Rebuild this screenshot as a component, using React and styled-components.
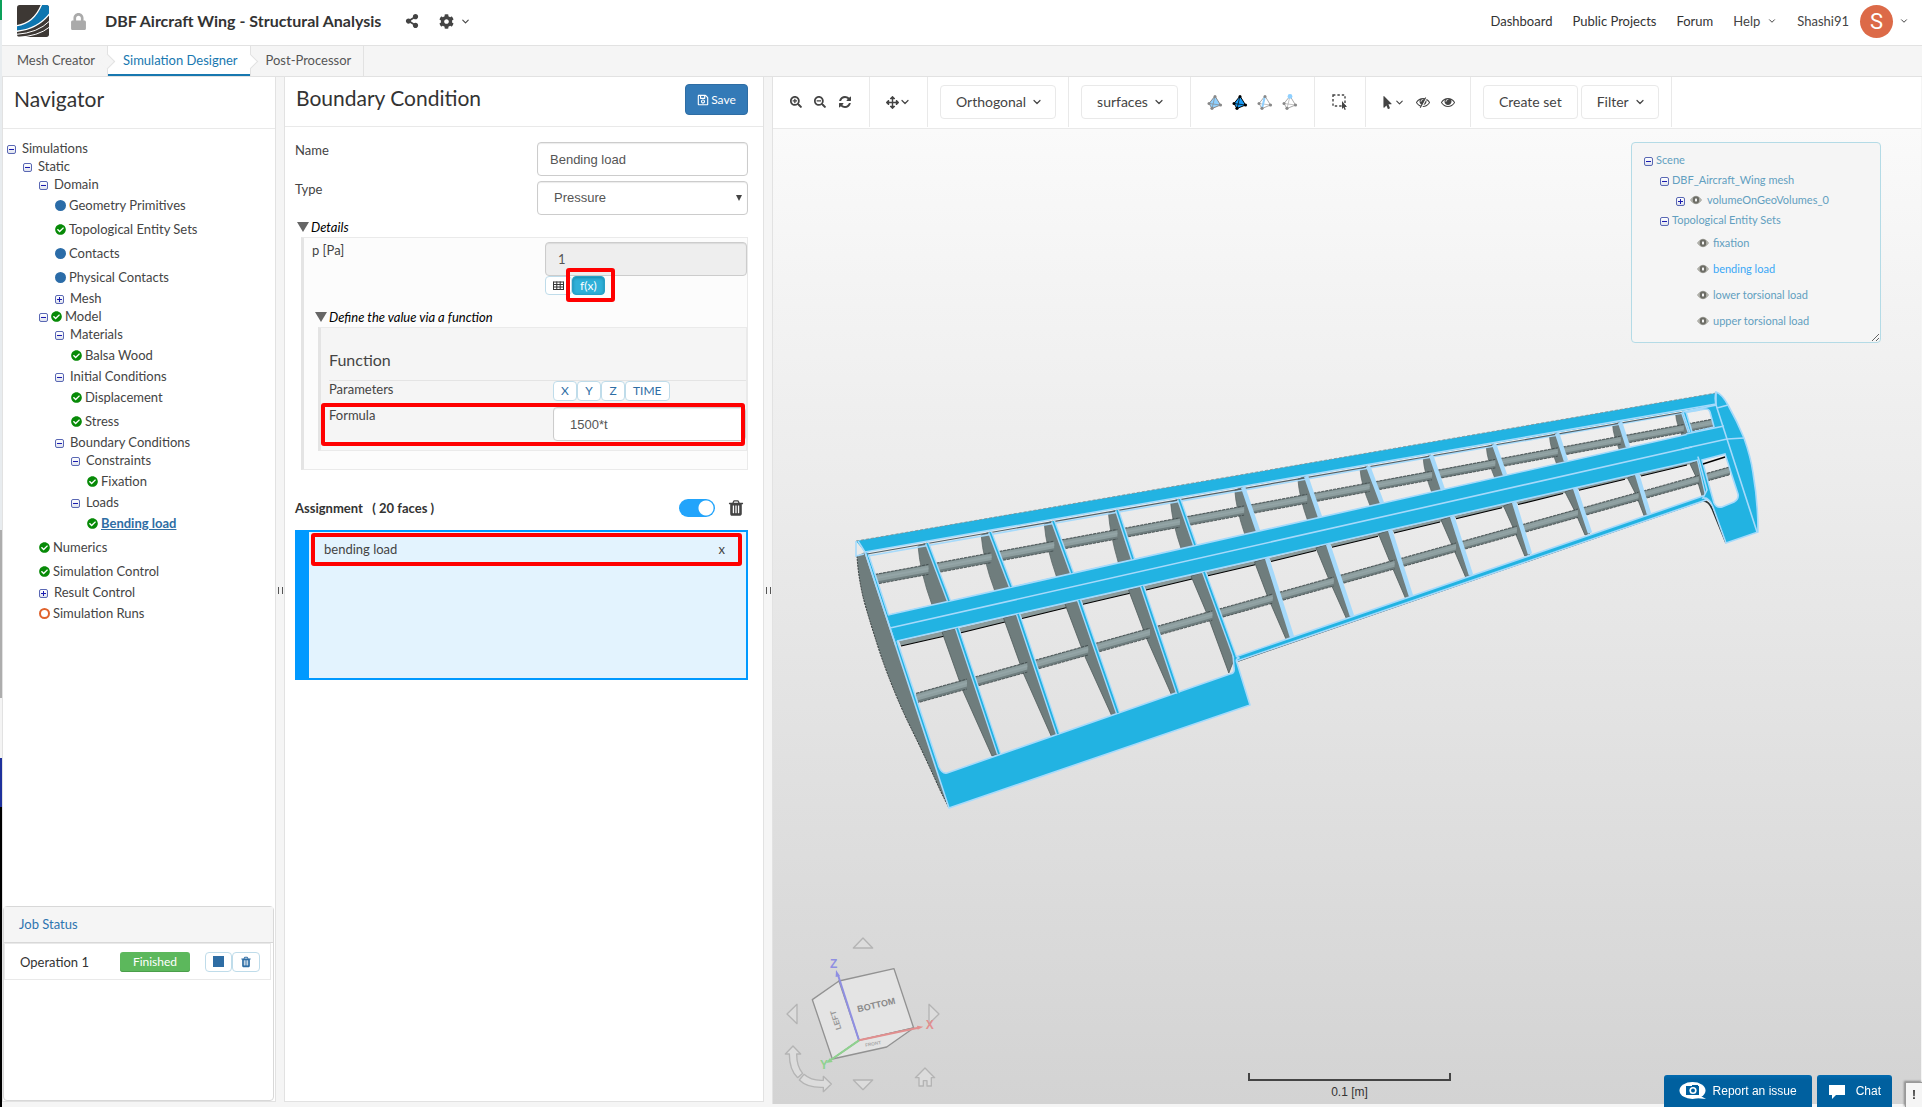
import React, { Component } from "react";
import styled, { createGlobalStyle, css } from "styled-components";
import {
  FaLock,
  FaShareAlt,
  FaCog,
  FaSearchPlus,
  FaSearchMinus,
  FaArrowsAlt,
  FaMousePointer,
  FaRegSave,
  FaCheckCircle,
} from "react-icons/fa";
import { FiChevronDown } from "react-icons/fi";

const GlobalStyle = createGlobalStyle`
  * { box-sizing: border-box; }
  body {
    margin: 0;
    font-family: Lato, "Liberation Sans", sans-serif;
    font-size: 13px;
    line-height: 16px;
    color: #333;
    background: #f5f5f5;
  }
  button, input, select { font: inherit; color: inherit; margin: 0; }
  button { cursor: pointer; }
  a { color: inherit; text-decoration: none; }
  h1, h2, h3 { margin: 0; font-weight: 400; }
  ul { list-style: none; margin: 0; padding: 0; }
`;

//Icons
const Glyph = ({ d, size = 14 }) => (
  <svg width={size} height={size} viewBox="0 0 1792 1792" fill="currentColor" aria-hidden="true">
    <path d={d} />
  </svg>
);

const REFRESH =
  "M1639 1056q0 5-1 7-64 268-268 434.5t-478 166.5q-146 0-282.5-55t-243.5-157l-129 129q-19 19-45 19t-45-19-19-45v-448q0-26 19-45t45-19h448q26 0 45 19t19 45-19 45l-137 137q71 66 161 102t187 36q134 0 250-65t186-179q11-17 53-117 8-23 30-23h192q13 0 22.5 9.5t9.5 22.5zm25-800v448q0 26-19 45t-45 19h-448q-26 0-45-19t-19-45 19-45l138-138q-148-137-349-137-134 0-250 65t-186 179q-11 17-53 117-8 23-30 23h-199q-13 0-22.5-9.5t-9.5-22.5v-7q65-268 270-434.5t480-166.5q146 0 284 55.5t245 156.5l130-129q19-19 45-19t45 19 19 45z";
const TRASH =
  "M704 1376v-704q0-14-9-23t-23-9h-64q-14 0-23 9t-9 23v704q0 14 9 23t23 9h64q14 0 23-9t9-23zm256 0v-704q0-14-9-23t-23-9h-64q-14 0-23 9t-9 23v704q0 14 9 23t23 9h64q14 0 23-9t9-23zm256 0v-704q0-14-9-23t-23-9h-64q-14 0-23 9t-9 23v704q0 14 9 23t23 9h64q14 0 23-9t9-23zm-544-992h448l-48-117q-7-9-17-11h-317q-10 2-17 11zm928 32v64q0 14-9 23t-23 9h-96v948q0 83-47 143.5t-113 60.5h-832q-66 0-113-58.5t-47-141.5v-952h-96q-14 0-23-9t-9-23v-64q0-14 9-23t23-9h309l70-167q15-37 54-63t79-26h320q40 0 79 26t54 63l70 167h309q14 0 23 9t9 23z";
const EYE =
  "M1664 960q-152-236-381-353 61 104 61 225 0 185-131.5 316.5t-316.5 131.5-316.5-131.5-131.5-316.5q0-121 61-225-229 117-381 353 133 205 333.5 326.5t434.5 121.5 434.5-121.5 333.5-326.5zm-720-384q0-20-14-34t-34-14q-125 0-214.5 89.5t-89.5 214.5q0 20 14 34t34 14 34-14 14-34q0-86 61-147t147-61q20 0 34-14t14-34zm848 384q0 34-20 69-140 230-376.5 368.5t-499.5 138.5-499.5-139-376.5-368q-20-35-20-69t20-69q140-229 376.5-368t499.5-139 499.5 139 376.5 368q20 35 20 69z";

const EyeSlash = () => (
  <svg width="14" height="14" viewBox="0 0 1792 1792" aria-hidden="true">
    <path d={EYE} fill="currentColor" />
    <path d="M1360 300L690 1600" stroke="#fff" strokeWidth="200" />
    <path d="M1250 330L540 1620" stroke="currentColor" strokeWidth="130" />
  </svg>
);

const TableIcon = () => (
  <svg width="11" height="9" viewBox="0 0 11 9" aria-hidden="true">
    <path d="M.5 1H10.5M.5 3.5H10.5M.5 6H10.5M.5 8.5H10.5M.5 .5V9M3.8 .5V9M7.2 .5V9M10.5 .5V9" stroke="currentColor" fill="none" />
  </svg>
);

const SceneEye = () => (
  <svg width="12" height="10" viewBox="0 0 12 10" aria-hidden="true">
    <path d="M.5 5Q3 1.2 6 1.2T11.5 5Q9 8.8 6 8.8T.5 5Z" fill="#c6c6bf" stroke="#8f8f88" strokeWidth=".8" />
    <circle cx="6" cy="5" r="3.4" fill="#6d6d66" />
    <rect x="5" y="3.6" width="2" height="2.8" fill="#f5f5f5" />
  </svg>
);

const Logo = () => (
  <svg width="32" height="32" viewBox="0 0 96 96" aria-hidden="true">
    <defs>
      <clipPath id="logo-clip">
        <rect width="96" height="96" rx="8" />
      </clipPath>
    </defs>
    <g clipPath="url(#logo-clip)">
      <rect width="96" height="96" fill="#3d3834" />
      <path d="M0 62Q50 56 75 0H96V28Q66 72 0 78Z" fill="#0d76b0" />
      <path d="M-2 62Q50 56 74 -2" fill="none" stroke="#fff" strokeWidth="4" />
      <path d="M-2 79Q62 72 98 26" fill="none" stroke="#fff" strokeWidth="4" />
      <path d="M-2 88Q62 84 98 48" fill="none" stroke="#fff" strokeWidth="3" />
      <path d="M0 97Q64 94 98 66" fill="none" stroke="#fff" strokeWidth="3" />
    </g>
  </svg>
);

const Tetra = ({ face, edge, dots, line, tip }) => (
  <svg width="16" height="16" viewBox="0 0 16 16" aria-hidden="true">
    <path d="M8 2L13.5 11L5 14.5L2 9.5Z" fill={face || "none"} stroke={edge} strokeWidth="1" />
    <path d="M2 9.5L13.5 11M8 2L5 14.5" stroke={edge} strokeWidth=".7" />
    {line && <path d="M8 2L5 14.5" stroke="#8fd0ff" strokeWidth="2" />}
    <circle cx="2" cy="9.5" r="1.5" fill={dots} />
    <circle cx="13.5" cy="11" r="1.6" fill={dots} />
    <circle cx="5" cy="14.3" r="1.6" fill={dots} />
    <circle cx="8" cy="2.4" r={tip ? 2.4 : 1.5} fill={tip || dots} />
  </svg>
);

const BoxSelect = () => (
  <svg width="16" height="16" viewBox="0 0 16 16" aria-hidden="true">
    <rect x="1" y="1" width="12" height="11" fill="none" stroke="#444" strokeWidth="1.4" strokeDasharray="2.4 2" />
    <path d="M10 7L15 13L12.8 13L13.8 15.4L12.6 16L11.6 13.6L10 15Z" fill="#444" />
  </svg>
);

//Shell
const Shell = styled.div`
  min-height: 100vh;
  display: flex;
  background: #f5f5f5;
`;

const DesktopEdge = styled.div`
  width: 2px;
  flex: none;
  background: linear-gradient(
    #0ca05a 0 20px, #e8ecef 20px 530px, #adadad 530px 698px,
    #f4f4f4 698px 758px, #1e319c 758px 807px, #000 807px
  );
`;

const Page = styled.div`
  flex: 1;
  min-width: 0;
  display: flex;
  flex-direction: column;
`;

const TopBar = styled.header`
  height: 46px;
  display: flex;
  align-items: center;
  justify-content: space-between;
  padding: 0 13px 3px 15px;
  background: #fff;
  border-bottom: 1px solid #e2e2e2;
`;

const TopGroup = styled.div`
  display: flex;
  align-items: center;
  svg { display: block; }
`;

const ProjectTitle = styled.h1`
  font-size: 16px;
  line-height: 20px;
  font-weight: 700;
  margin: 0 24px 0 18px;
`;

const LockMark = styled.span`
  margin-left: 21px;
  color: #aaa;
`;

const PlainButton = styled.button`
  display: inline-flex;
  align-items: center;
  gap: ${(p) => p.$gap || 0}px;
  padding: 0;
  border: 0;
  background: none;
  color: ${(p) => p.$color || "#444"};
  svg { display: block; }
`;

const TopNav = styled.nav`
  display: flex;
  align-items: center;
  gap: 20px;
  svg { display: block; }
`;

const Avatar = styled.span`
  width: 33px;
  height: 33px;
  margin-left: 5px;
  border-radius: 50%;
  display: flex;
  align-items: center;
  justify-content: center;
  background: #dc6a48;
  color: #fff;
  font: 22px/33px Roboto, sans-serif;
`;

const Tabs = styled.nav`
  height: 31px;
  display: flex;
  border-bottom: 1px solid #e2e2e2;
`;

const Tab = styled.a`
  position: relative;
  padding: 6px 12px 0 15px;
  border-right: 1px solid #e2e2e2;
  color: ${(p) => (p.$active ? "#1878b0" : "#555")};
  background: ${(p) => (p.$active ? "#fff" : "#f5f5f5")};
  ${(p) => p.$active && css`box-shadow: inset 0 -2px #1878b0;`}
  ${(p) => p.$arrow && css`
    &::after {
      content: "";
      position: absolute;
      z-index: 1;
      top: 10px;
      right: -6px;
      width: 10px;
      height: 10px;
      background: inherit;
      border-top: 1px solid #e2e2e2;
      border-right: 1px solid #e2e2e2;
      transform: rotate(45deg);
    }
  `}
`;

const Workspace = styled.main`
  flex: 1;
  min-height: 0;
  display: flex;
  padding-bottom: 3px;
`;

const Splitter = styled.div`
  width: 8px;
  flex: none;
  display: flex;
  align-items: center;
  justify-content: center;
  &::before {
    content: "";
    width: 3px;
    height: 7px;
    border: solid #555;
    border-width: 0 1px;
  }
`;

const SidePanel = styled.section`
  width: ${(p) => p.$width}px;
  flex: none;
  display: flex;
  flex-direction: column;
  margin-bottom: 2px;
  background: #fff;
  border: solid #e2e2e2;
  border-width: 0 1px 1px;
`;

const PanelHead = styled.div`
  height: ${(p) => p.$height}px;
  flex: none;
  display: flex;
  align-items: center;
  justify-content: space-between;
  padding: 0 15px 4px 11px;
  border-bottom: 1px solid #e9e9e9;
`;

const PanelTitle = styled.h2`
  padding-bottom: 3px;
  font-size: 21px;
  line-height: 28px;
`;

//Navigator
const Tree = styled.ul`
  padding: 10px 0 0 4px;
  flex: 1;
`;

const TreeRow = styled.li`
  display: flex;
  align-items: center;
  height: ${(p) => (p.$leaf ? 24 : 18)}px;
  padding-left: ${(p) => p.$level * 16}px;
  gap: 3px;
`;

const Expander = styled.button`
  width: 9px;
  height: 9px;
  flex: none;
  padding: 0;
  margin: 3px ${(p) => (p.$tight ? 0 : 3)}px 0 0;
  position: relative;
  border: 1px solid #5a68b4;
  border-radius: 2px;
  background: linear-gradient(#fff, #dfe3ee);
  &::before {
    content: "";
    position: absolute;
    inset: 3px 1px;
    background: #1b1bb0;
  }
  ${(p) => p.$closed && css`
    &::after {
      content: "";
      position: absolute;
      inset: 1px 3px;
      background: #1b1bb0;
    }
  `}
`;

const Dot = styled.span`
  width: 11px;
  height: 11px;
  flex: none;
  border-radius: 50%;
  background: ${(p) => (p.$hollow ? "#fff" : "#2b6ca8")};
  border: 2px solid ${(p) => (p.$hollow ? "#e0622c" : "#2b6ca8")};
`;

const CheckMark = styled(FaCheckCircle)`
  width: 11px;
  height: 11px;
  flex: none;
  color: #078a07;
`;

const TreeLink = styled.a`
  color: ${(p) => (p.$selected ? "#2e6da4" : "#444")};
  font-weight: ${(p) => (p.$selected ? 700 : 400)};
  text-decoration: ${(p) => (p.$selected ? "underline" : "none")};
`;

const JobBox = styled.section`
  height: 195px;
  flex: none;
  margin: 0 1px 0 0;
  border: 1px solid #d8d8d8;
  border-radius: 4px;
`;

const JobHead = styled.h3`
  height: 36px;
  padding: 9px 15px;
  font-size: 13px;
  line-height: 16px;
  color: #2e74b0;
  background: #f5f5f5;
  border-bottom: 1px solid #d8d8d8;
`;

const JobRow = styled.div`
  display: flex;
  align-items: center;
  height: 37px;
  margin-right: 2px;
  padding-left: 15px;
  border: 1px solid #e9e9e9;
`;

const JobName = styled.span`
  width: 100px;
  flex: none;
`;

const Badge = styled.span`
  width: 70px;
  height: 20px;
  flex: none;
  margin-right: 15px;
  border-radius: 3px;
  background: #5cb85c;
  box-shadow: inset 0 -1px #4a9e4a;
  color: #fff;
  font-size: 12px;
  line-height: 19px;
  text-align: center;
`;

const SmallButton = styled.button`
  display: inline-flex;
  align-items: center;
  justify-content: center;
  min-width: ${(p) => p.$width || 24}px;
  height: ${(p) => p.$height || 20}px;
  padding: 0 7px;
  border: 1px solid #bfdcea;
  border-radius: 4px;
  background: #fff;
  color: ${(p) => p.$color || "#2e6da4"};
  font-size: 12px;
  line-height: 16px;
  ${(p) => p.$on && css`
    background: #2fb0d8;
    border-color: #27a0c6;
    color: #fff;
    box-shadow: inset 0 1px 3px #1786a8;
  `}
`;

const StopSquare = styled.span`
  width: 11px;
  height: 11px;
  flex: none;
  background: #2e6da4;
`;

//Boundary condition form
const SaveButton = styled.button`
  width: 63px;
  height: 31px;
  display: inline-flex;
  align-items: center;
  justify-content: center;
  gap: 2px;
  border: 1px solid #2e6da4;
  border-radius: 4px;
  padding: 0;
  background: #337ab7;
  color: #fff;
  font-size: 12px;
`;

const FormBody = styled.form`
  padding: 15px 15px 0 10px;
`;

const Field = styled.div`
  display: grid;
  grid-template-columns: 1fr ${(p) => p.$control}px;
  margin-bottom: ${(p) => p.$after || 0}px;
  padding-left: ${(p) => p.$indent || 0}px;
`;

const FieldLabel = styled.label`
  color: #444;
`;

const controlStyle = css`
  width: 100%;
  height: 34px;
  border: 1px solid #ccc;
  border-radius: 4px;
  background-color: #fff;
  color: #555;
  font-family: "Liberation Sans", Arial, sans-serif;
  font-size: 13px;
  box-shadow: inset 0 1px 1px rgba(0, 0, 0, 0.08);
`;

const TextInput = styled.input`
  ${controlStyle}
  padding: 0 ${(p) => p.$pad || 12}px;
  &:disabled {
    background-color: #eee;
    font-family: Lato, sans-serif;
  }
`;

const SelectWrap = styled.div`
  position: relative;
  &::after {
    content: "";
    position: absolute;
    right: 6px;
    top: 14px;
    border: solid transparent;
    border-width: 6px 3px 0;
    border-top-color: #444;
  }
`;

const Select = styled.select`
  ${controlStyle}
  appearance: none;
  padding: 0 16px;
`;

const FoldTitle = styled.button`
  display: flex;
  align-items: center;
  gap: 2px;
  padding: 0 0 2px;
  margin-left: ${(p) => p.$indent}px;
  border: 0;
  background: none;
  color: #000;
  font-style: italic;
  &::before {
    content: "";
    border: solid transparent;
    border-width: 10px 6px 0;
    border-top-color: #666;
  }
`;

const FoldBox = styled.div`
  margin-left: ${(p) => p.$indent}px;
  padding: ${(p) => p.$pad};
  border: 1px solid #eaeaea;
  border-left: 3px solid #e4e4e4;
  background: ${(p) => p.$bg};
`;

const FunctionTitle = styled.h3`
  padding: 22px 0 10px;
  margin: 0 0 0 8px;
  font-size: 16px;
  line-height: 20px;
  color: #444;
  border-bottom: 1px solid #e4e4e4;
`;

const ButtonRow = styled.div`
  display: flex;
`;

const Marked = styled.div`
  position: relative;
  &::after {
    content: "";
    position: absolute;
    inset: ${(p) => p.$inset};
    border: 4px solid #f00;
    border-radius: 3px;
    pointer-events: none;
  }
`;

const AssignHead = styled.div`
  display: flex;
  align-items: center;
  height: 24px;
  margin: 26px 3px 10px 0;
`;

const AssignTitle = styled.h3`
  flex: 1;
  font-size: 13px;
  font-weight: 700;
  white-space: pre;
`;

const Switch = styled.input`
  appearance: none;
  width: 36px;
  height: 18px;
  margin: 0 12px 0 0;
  border-radius: 9px;
  background: radial-gradient(circle at 27px 9px, #fff 7px, #22a4fb 8px);
`;

const AssignBox = styled.div`
  height: 150px;
  border: 2px solid #0099ff;
  border-left-width: 14px;
  background: #e3f3fe;
`;

const AssignItem = styled(Marked)`
  display: flex;
  align-items: center;
  justify-content: space-between;
  height: 34px;
  padding: 0 21px 0 15px;
  color: #444;
`;

//Viewer
const Viewer = styled.section`
  flex: 1;
  min-width: 0;
  display: flex;
  flex-direction: column;
  margin-right: 1px;
  border-left: 1px solid #e2e2e2;
`;

const Toolbar = styled.div`
  height: 52px;
  flex: none;
  display: flex;
  padding-bottom: 1px;
  background: #fff;
  border-bottom: 1px solid #e9e9e9;
`;

const ToolGroup = styled.div`
  display: flex;
  align-items: center;
  gap: ${(p) => p.$gap}px;
  padding: 0 ${(p) => p.$pad}px;
  border-right: 1px solid #e9e9e9;
`;

const ToolButton = styled.button`
  display: inline-flex;
  align-items: center;
  gap: 5px;
  height: 34px;
  padding: 0 ${(p) => (p.$menu ? 12 : 15)}px 0 15px;
  border: 1px solid #e9e9e9;
  border-radius: 4px;
  background: #fff;
  color: #444;
  font-size: 14px;
  white-space: nowrap;
`;

const Stage = styled.div`
  position: relative;
  flex: 1;
  overflow: hidden;
  background: linear-gradient(#fafafa, #d3d3d3);
`;

const WingSvg = styled.svg`
  position: absolute;
  inset: 0;
  width: 100%;
  height: 100%;
`;

const CubeSvg = styled.svg`
  position: absolute;
  left: -3px;
  bottom: -3px;
  width: 200px;
  height: 187px;
`;

const SceneBox = styled.aside`
  position: absolute;
  top: 13px;
  right: 40px;
  width: 250px;
  height: 201px;
  padding: 7px 12px;
  border: 1px solid #b4dbe6;
  border-radius: 4px;
  background: #f5f5f5;
  font-size: 11px;
  resize: both;
  overflow: hidden;
`;

const SceneRow = styled.li`
  display: flex;
  align-items: center;
  gap: ${(p) => p.$gap || 3}px;
  height: ${(p) => (p.$leaf ? 26 : 20)}px;
  padding-left: ${(p) => p.$indent}px;
  color: ${(p) => (p.$on ? "#3aa8f5" : "#629fc0")};
`;

const ScaleBar = styled.div`
  position: absolute;
  right: 470px;
  bottom: 5px;
  width: 203px;
  text-align: center;
  font: 12px/14px "Liberation Sans", Arial, sans-serif;
  color: #333;
  &::before {
    content: "";
    display: block;
    height: 6px;
    border: 2px solid #444;
    border-top: 0;
    margin-bottom: 4px;
  }
`;

const HelpDock = styled.div`
  position: fixed;
  right: 0;
  bottom: 0;
  z-index: 2;
  display: flex;
  align-items: flex-end;
  gap: 5px;
`;

const DockButton = styled.button`
  height: 32px;
  display: inline-flex;
  align-items: center;
  gap: ${(p) => p.$gap}px;
  padding: 0 ${(p) => p.$pad}px;
  border: 0;
  border-radius: 3px 3px 0 0;
  background: linear-gradient(#026bb0, #00609f 5px);
  color: #fff;
  font: 12px/16px "Liberation Sans", Arial, sans-serif;
`;

const NoticeButton = styled.button`
  width: 17px;
  height: 25px;
  margin-left: 8px;
  padding: 0;
  border: 1px solid #999;
  border-width: 1px 0 0 1px;
  background: #f5f5f5;
  box-shadow: -1px -1px 2px #888;
  font: bold 12px/16px "Liberation Sans", Arial, sans-serif;
`;

const treeData = [
  { level: 0, text: "Simulations", fold: "open" },
  { level: 1, text: "Static", fold: "open" },
  { level: 2, text: "Domain", fold: "open" },
  { level: 3, text: "Geometry Primitives", mark: "dot" },
  { level: 3, text: "Topological Entity Sets", mark: "check" },
  { level: 3, text: "Contacts", mark: "dot" },
  { level: 3, text: "Physical Contacts", mark: "dot" },
  { level: 3, text: "Mesh", fold: "closed" },
  { level: 2, text: "Model", fold: "open", mark: "check" },
  { level: 3, text: "Materials", fold: "open" },
  { level: 4, text: "Balsa Wood", mark: "check" },
  { level: 3, text: "Initial Conditions", fold: "open" },
  { level: 4, text: "Displacement", mark: "check" },
  { level: 4, text: "Stress", mark: "check" },
  { level: 3, text: "Boundary Conditions", fold: "open" },
  { level: 4, text: "Constraints", fold: "open" },
  { level: 5, text: "Fixation", mark: "check" },
  { level: 4, text: "Loads", fold: "open" },
  { level: 5, text: "Bending load", mark: "check", selected: true },
  { level: 2, text: "Numerics", mark: "check" },
  { level: 2, text: "Simulation Control", mark: "check" },
  { level: 2, text: "Result Control", fold: "closed" },
  { level: 2, text: "Simulation Runs", mark: "hollow" },
];

const NavigatorTree = () => (
  <Tree>
    {treeData.map((row) => (
      <TreeRow key={row.text} $level={row.level} $leaf={!row.fold}>
        {row.fold && (
          <Expander type="button" aria-label={"Toggle " + row.text} $closed={row.fold === "closed"} $tight={!!row.mark} />
        )}
        {row.mark === "check" && <CheckMark />}
        {row.mark === "dot" && <Dot />}
        {row.mark === "hollow" && <Dot $hollow />}
        <TreeLink href="#" $selected={row.selected}>{row.text}</TreeLink>
      </TreeRow>
    ))}
  </Tree>
);

//Wing model: every rib is [x top, y top, x bottom, y bottom]
const upperRibs = [
  [865, 552, 888, 615], [927, 543, 949, 601], [990, 532, 1011, 587], [1053, 521, 1072, 573],
  [1117, 510, 1133, 559], [1179, 499, 1195, 545], [1243, 487, 1258, 531], [1306, 476, 1320, 517],
  [1368, 466, 1382, 503], [1431, 455, 1443, 490], [1494, 444, 1505, 475], [1557, 433, 1566, 461],
  [1620, 422, 1628, 447], [1683, 412, 1690, 433],
];
const lowerRibs = [
  [897, 641, 941, 773], [957, 628, 999, 754], [1018, 614, 1058, 734], [1079, 600, 1118, 713],
  [1142, 586, 1178, 693], [1204, 572, 1235, 657], [1267, 558, 1292, 637], [1328, 544, 1352, 616],
  [1390, 530, 1411, 596], [1452, 516, 1471, 575], [1514, 502, 1530, 554], [1575, 488, 1590, 533],
  [1637, 474, 1649, 514], [1699, 460, 1707, 495],
];

// x of a rib where the rod crosses it
const crossing = (rib, rod) => {
  const [x1, y1, x2, y2] = rib;
  const slope = (rod[3] - rod[1]) / (rod[2] - rod[0]);
  const k = (x2 - x1) / (y2 - y1);
  return (x1 + k * (rod[1] - slope * rod[0] - y1)) / (1 - k * slope);
};

const Rod = ({ ribs, rod, end }) => {
  const slope = (rod[3] - rod[1]) / (rod[2] - rod[0]);
  return ribs.map((rib, i) => {
    const a = crossing(rib, rod);
    const b = i < ribs.length - 1 ? crossing(ribs[i + 1], rod) - 8 + i * 0.3 : end;
    const ya = rod[1] + slope * (a - rod[0]);
    const yb = rod[1] + slope * (b - rod[0]);
    const h = 5 - i * 0.08;
    const band = (top, bottom) => `M${a} ${ya + top}L${b} ${yb + top}V${yb + bottom}L${a} ${ya + bottom}Z`;
    return (
      <g key={i}>
        <path d={band(-h, h)} fill="#6f7e7f" />
        <path d={band(-h + 1, h * 0.5)} fill="#8d9e9f" />
        <path d={band(-h + 3, 0)} fill="#94a5a7" />
        <path d={`M${a} ${ya - h}L${b} ${yb - h}M${a} ${ya + h}L${b} ${yb + h}`} stroke="#3b4546" strokeWidth=".8" strokeDasharray="3 1" />
      </g>
    );
  });
};

const Wing = () => (
  <WingSvg viewBox="773 129 1148 975" role="img" aria-label="Aircraft wing model">
    <path d="M857 556L865 552L888 615L897 641L941 773L949 808L940 790Q922 750 907 720Q892 688 880 653Q868 616 863 597Q858 575 857 556Z" fill="#6f7d7d" />
    <path d="M857 556Q858 575 863 597Q868 616 880 653Q892 688 907 720Q922 750 940 790L949 808" fill="none" stroke="#2e3535" strokeWidth="1" strokeDasharray="2 1" />
    {upperRibs.slice(1).map(([x1, y1, x2, y2], i) => (
      <path key={i} d={`M${x1 - 9 + i * 0.15} ${y1 + 3}Q${x1 - 7} ${(y1 + y2) / 2} ${x2 - 17 + i * 0.8} ${y2 + 4}L${x2} ${y2}L${x1} ${y1}Z`} fill="#6f7d7d" stroke="#566161" strokeWidth=".7" />
    ))}
    {lowerRibs.slice(0, -1).map(([x1, y1], i) => {
      const next = lowerRibs[i + 1];
      const t = 7 - i * 0.25;
      return (
        <g key={i}>
          <path d={`M${x1 + 2} ${y1}L${next[0]} ${next[1]}V${next[1] + t - 2}L${x1 + 4} ${y1 + t - 2}Z`} fill="#8b9a9a" />
          <path d={`M${x1 + 4} ${y1 + t - 2}L${next[0] - 12} ${next[1] + t + 1}`} stroke="#000" strokeWidth="1.2" />
        </g>
      );
    })}
    {lowerRibs.slice(1).map(([x1, y1, x2, y2], i) => (
      <path key={i} d={`M${x1 - 15 + i * 0.5} ${y1 + 4}L${x1 + (x2 - x1) / 2 - 15 + i * 0.7} ${(y1 + y2) / 2}L${x2 - 7 + i * 0.2} ${y2 + (i === 4 ? 16 : 2)}L${x2} ${y2}L${x1} ${y1}Z`} fill="#6f7d7d" stroke="#4e5959" strokeWidth=".8" />
    ))}
    <Rod ribs={upperRibs} rod={[877, 579, 1713, 423]} end={1714} />
    <Rod ribs={lowerRibs} rod={[917, 698, 1729, 471]} end={1730} />

    {/* trailing edge */}
    <path d="M1238 661L1702 501Q1709 500 1713 511L1726 543" fill="none" stroke="#2b3232" strokeWidth="1.6" />
    <path d="M1235 657L1703 496L1706 500L1237 661Z" fill="#22b3e2" stroke="#a6dafb" strokeWidth="1.6" />

    {/* root rib and flap */}
    <path d="M861 544L865 552L949 808L1250 705L1237 663Q1235 659 1239 658L1233 654L1234 668Q1235 673 1230 674L947 773Q942 774 939 767L868 553Z" fill="#22b3e2" stroke="#a6dafb" strokeWidth="1.6" strokeLinejoin="round" />

    {/* skin bands */}
    <path d="M856 541L1716 393V405L865 552Z" fill="#22b3e2" />
    <path d="M856 541L1716 393" stroke="#7c8d90" strokeWidth=".8" strokeDasharray="3 2" />
    <path d="M865 552L1716 404M868 556L1700 410" stroke="#a6dafb" strokeWidth="1.6" />
    <path d="M867 554L1690 411" stroke="#4f6068" strokeWidth="1.2" />
    <path d="M887 615L1724 426L1727 454L896 641Z" fill="#22b3e2" />
    <path d="M888 615L1724 426M890 628L1727 439L1743 438M897 641L1725 454" fill="none" stroke="#a6dafb" strokeWidth="1.6" />
    <path d="M856 541V556L864 554M858 541L865 552L896 646" fill="none" stroke="#a6dafb" strokeWidth="1.6" />

    {/* ribs */}
    {upperRibs.slice(1).map(([x1, y1, x2, y2], i) => (
      <g key={i}>
        <path d={`M${x1} ${y1}L${x2} ${y2}`} stroke="#a6dafb" strokeWidth="4.4" />
        {(i < 5 || i === 12) && <path d={`M${x1} ${y1}L${x2} ${y2}`} stroke="#22b3e2" strokeWidth="1.6" />}
      </g>
    ))}
    {lowerRibs.slice(1).map(([x1, y1, x2, y2], i) => (
      <g key={i}>
        <path d={`M${x1} ${y1}L${x2} ${y2}`} stroke="#a6dafb" strokeWidth="4.4" />
        {(i < 5 || i === 12) && <path d={`M${x1} ${y1}L${x2} ${y2}`} stroke="#22b3e2" strokeWidth="1.8" />}
      </g>
    ))}

    {/* tip */}
    <path
      d="M1716 392Q1722 394 1728 405Q1737 421 1744 438Q1751 458 1753 473Q1758 502 1758 532L1726 543L1713 507Q1709 497 1703 498L1707 490L1699 460L1690 433L1683 412L1716 405ZM1686 412L1706 409Q1709 409 1710 412L1714 427L1692 432ZM1702 460L1725 454L1738 494Q1739 499 1734 502L1722 507Q1716 508 1714 503Z"
      fill="#22b3e2"
      fillRule="evenodd"
      stroke="#a6dafb"
      strokeWidth="1.6"
    />
    <path d="M1686 433L1724 426L1727 439V450L1696 457Z" fill="#22b3e2" />
    <path d="M1716 392Q1714 400 1717 408L1727 439L1757 532M1717 408L1728 405M1682 449L1727 439L1744 438M1686 434L1724 426" fill="none" stroke="#a6dafb" strokeWidth="1.6" />
    <path d="M1703 464L1725 457" stroke="#000" strokeWidth="1.4" />
  </WingSvg>
);

const ViewCube = () => (
  <CubeSvg viewBox="0 0 600 561" role="img" aria-label="View orientation">
    <g fill="#dcdcdc" stroke="#b4b4b4" strokeWidth="4" strokeLinejoin="round">
      <path d="M279 54L308 84H250Z" />
      <path d="M279 509L308 480H250Z" />
      <path d="M51 282L81 253V311Z" />
      <path d="M507 282L477 253V311Z" />
      <path d="M69 378L92 402H80Q80 440 98 460L83 473Q58 450 58 402H46Z" />
      <path d="M184 492L160 515V502Q112 504 88 480L102 463Q124 483 160 481V469Z" />
      <path d="M465 444L494 473H484V498H471V482H460V498H447V473H436Z" />
    </g>
    <g fill="#e4e4e4" stroke="#929292" strokeWidth="4" strokeLinejoin="round">
      <path d="M207 183L372 146L431 324L267 361Z" />
      <path d="M207 183L127 239L187 417L267 361Z" />
      <path d="M267 361L431 324L350 381L187 417Z" />
    </g>
    <g fontFamily="Liberation Sans, Arial, sans-serif" fontWeight="700" textAnchor="middle">
      <text x="321" y="264" fontSize="27" fill="#8a8a8a" transform="rotate(-13 321 264)">BOTTOM</text>
      <text x="205" y="298" fontSize="24" fill="#999" transform="rotate(-108 205 298)">LEFT</text>
      <text x="310" y="376" fontSize="14" fill="#aaa" transform="rotate(-10 310 376)">FRONT</text>
    </g>
    <path d="M267 361L204 165" stroke="#8f8fe2" strokeWidth="6" />
    <path d="M198 150L210 168L197 171Z" fill="#8f8fe2" />
    <path d="M267 361L445 323" stroke="#e28f8f" strokeWidth="6" />
    <path d="M460 320L441 317L443 329Z" fill="#e28f8f" />
    <path d="M267 361L182 420" stroke="#8fd28f" strokeWidth="6" />
    <path d="M168 429L188 426L180 414Z" fill="#8fd28f" />
    <g fontFamily="Liberation Sans, Arial, sans-serif" fontWeight="700" fontSize="36" textAnchor="middle">
      <text x="191" y="143" fill="#8f8fe2">Z</text>
      <text x="479" y="326" fill="#e28f8f">X</text>
      <text x="162" y="446" fill="#8fd28f">Y</text>
    </g>
  </CubeSvg>
);

const Chevron = ({ size = 12 }) => <FiChevronDown size={size} strokeWidth={2.4} />;

class App extends Component {
  constructor() {
    super();
    this.state = {
      name: "Bending load",
      type: "Pressure",
      formula: "1500*t",
      assigned: true,
    };
  }
  handleChange = (event) => {
    this.setState({
      [event.target.name]: event.target.value,
    });
  };
  handleToggle = (event) => {
    this.setState({ assigned: event.target.checked });
  };
  render() {
    const { name, type, formula, assigned } = this.state;
    return (
      <Shell>
        <GlobalStyle />
        <DesktopEdge />
        <Page>
          <TopBar>
            <TopGroup>
              <Logo />
              <LockMark><FaLock size={17} /></LockMark>
              <ProjectTitle>DBF Aircraft Wing - Structural Analysis</ProjectTitle>
              <TopNav>
                <PlainButton aria-label="Share"><FaShareAlt size={14} /></PlainButton>
                <PlainButton aria-label="Settings" $gap={6}><FaCog size={15} /><Chevron size={11} /></PlainButton>
              </TopNav>
            </TopGroup>
            <TopNav>
              <a href="#">Dashboard</a>
              <a href="#">Public Projects</a>
              <a href="#">Forum</a>
              <PlainButton $gap={7}>Help <Chevron size={10} /></PlainButton>
              <PlainButton $gap={6}>Shashi91 <Avatar>S</Avatar> <Chevron size={10} /></PlainButton>
            </TopNav>
          </TopBar>
          <Tabs>
            <Tab href="#" $arrow>Mesh Creator</Tab>
            <Tab href="#" $active $arrow>Simulation Designer</Tab>
            <Tab href="#">Post-Processor</Tab>
          </Tabs>
          <Workspace>
            <SidePanel $width={274}>
              <PanelHead $height={52}>
                <PanelTitle>Navigator</PanelTitle>
              </PanelHead>
              <NavigatorTree />
              <JobBox>
                <JobHead>Job Status</JobHead>
                <JobRow>
                  <JobName>Operation 1</JobName>
                  <Badge>Finished</Badge>
                  <SmallButton aria-label="Stop" $width={26}><StopSquare /></SmallButton>
                  <SmallButton aria-label="Delete"><Glyph d={TRASH} size={12} /></SmallButton>
                </JobRow>
              </JobBox>
            </SidePanel>
            <Splitter />
            <SidePanel $width={480}>
              <PanelHead $height={50}>
                <PanelTitle>Boundary Condition</PanelTitle>
                <SaveButton><FaRegSave size={12} />Save</SaveButton>
              </PanelHead>
              <FormBody onSubmit={(event) => event.preventDefault()}>
                <Field $control={211} $after={5}>
                  <FieldLabel htmlFor="name">Name</FieldLabel>
                  <TextInput id="name" name="name" value={name} onChange={this.handleChange} />
                </Field>
                <Field $control={211} $after={4}>
                  <FieldLabel htmlFor="type">Type</FieldLabel>
                  <SelectWrap>
                    <Select id="type" name="type" value={type} onChange={this.handleChange}>
                      <option>Pressure</option>
                    </Select>
                  </SelectWrap>
                </Field>
                <FoldTitle type="button" $indent={2}>Details</FoldTitle>
                <FoldBox $indent={6} $pad="4px 0 18px 8px" $bg="#fcfcfc">
                  <Field $control={202} $after={14}>
                    <FieldLabel htmlFor="pressure">p [Pa]</FieldLabel>
                    <div>
                      <TextInput id="pressure" value="1" disabled readOnly />
                      <ButtonRow>
                        <SmallButton type="button" aria-label="Table" $height={19} $width={26} $color="#333"><TableIcon /></SmallButton>
                        <Marked $inset="-8px -10px -7px -6px">
                          <SmallButton type="button" $height={19} $width={32} $on>f(x)</SmallButton>
                        </Marked>
                      </ButtonRow>
                    </div>
                  </Field>
                  <FoldTitle type="button" $indent={3}>Define the value via a function</FoldTitle>
                  <FoldBox $indent={6} $pad="0 0 9px" $bg="#f5f5f5">
                    <FunctionTitle>Function</FunctionTitle>
                    <Field $control={193} $after={6} $indent={8}>
                      <FieldLabel as="span">Parameters</FieldLabel>
                      <ButtonRow>
                        <SmallButton type="button">X</SmallButton>
                        <SmallButton type="button">Y</SmallButton>
                        <SmallButton type="button">Z</SmallButton>
                        <SmallButton type="button">TIME</SmallButton>
                      </ButtonRow>
                    </Field>
                    <Marked $inset="-4px 1px -5px 0">
                      <Field $control={193} $indent={8}>
                        <FieldLabel htmlFor="formula">Formula</FieldLabel>
                        <TextInput id="formula" name="formula" $pad={16} value={formula} onChange={this.handleChange} />
                      </Field>
                    </Marked>
                  </FoldBox>
                </FoldBox>
                <AssignHead>
                  <AssignTitle>{"Assignment   ( 20 faces )"}</AssignTitle>
                  <Switch type="checkbox" aria-label="Assignment" checked={assigned} onChange={this.handleToggle} />
                  <PlainButton type="button" aria-label="Clear"><Glyph d={TRASH} size={18} /></PlainButton>
                </AssignHead>
                <AssignBox>
                  <AssignItem $inset="1px 4px 0 2px">
                    <span>bending load</span>
                    <PlainButton type="button">x</PlainButton>
                  </AssignItem>
                </AssignBox>
              </FormBody>
            </SidePanel>
            <Splitter />
            <Viewer>
              <Toolbar>
                <ToolGroup $gap={12} $pad={17}>
                  <PlainButton aria-label="Zoom in"><FaSearchPlus size={12} /></PlainButton>
                  <PlainButton aria-label="Zoom out"><FaSearchMinus size={12} /></PlainButton>
                  <PlainButton aria-label="Refresh"><Glyph d={REFRESH} /></PlainButton>
                </ToolGroup>
                <ToolGroup $pad={16}>
                  <PlainButton aria-label="Move"><FaArrowsAlt size={13} /><Chevron size={12} /></PlainButton>
                </ToolGroup>
                <ToolGroup $pad={12}>
                  <ToolButton $menu>Orthogonal <Chevron /></ToolButton>
                </ToolGroup>
                <ToolGroup $pad={12}>
                  <ToolButton $menu>surfaces <Chevron /></ToolButton>
                </ToolGroup>
                <ToolGroup $gap={9} $pad={16}>
                  <PlainButton aria-label="Volumes"><Tetra face="#8fd0ff" edge="#888" dots="#888" /></PlainButton>
                  <PlainButton aria-label="Faces"><Tetra face="#1c9cf5" edge="#000" dots="#000" /></PlainButton>
                  <PlainButton aria-label="Edges"><Tetra edge="#aaa" dots="#888" line /></PlainButton>
                  <PlainButton aria-label="Nodes"><Tetra edge="#aaa" dots="#888" tip="#8fd0ff" /></PlainButton>
                </ToolGroup>
                <ToolGroup $pad={17}>
                  <PlainButton aria-label="Box select"><BoxSelect /></PlainButton>
                </ToolGroup>
                <ToolGroup $gap={11} $pad={15}>
                  <PlainButton aria-label="Pick"><FaMousePointer size={13} /><Chevron size={11} /></PlainButton>
                  <PlainButton aria-label="Hide"><EyeSlash /></PlainButton>
                  <PlainButton aria-label="Show"><Glyph d={EYE} /></PlainButton>
                </ToolGroup>
                <ToolGroup $gap={3} $pad={12}>
                  <ToolButton>Create set</ToolButton>
                  <ToolButton $menu>Filter <Chevron /></ToolButton>
                </ToolGroup>
              </Toolbar>
              <Stage>
                <Wing />
                <ViewCube />
                <SceneBox>
                  <ul>
                    <SceneRow $indent={0}><Expander $tight aria-label="Toggle scene" />Scene</SceneRow>
                    <SceneRow $indent={16}><Expander $tight aria-label="Toggle mesh" />DBF_Aircraft_Wing mesh</SceneRow>
                    <SceneRow $indent={32} $gap={5}><Expander $tight $closed aria-label="Toggle volume" /><SceneEye />volumeOnGeoVolumes_0</SceneRow>
                    <SceneRow $indent={16}><Expander $tight aria-label="Toggle sets" />Topological Entity Sets</SceneRow>
                    <SceneRow $leaf $indent={53} $gap={4}><SceneEye />fixation</SceneRow>
                    <SceneRow $leaf $on $indent={53} $gap={4}><SceneEye />bending load</SceneRow>
                    <SceneRow $leaf $indent={53} $gap={4}><SceneEye />lower torsional load</SceneRow>
                    <SceneRow $leaf $indent={53} $gap={4}><SceneEye />upper torsional load</SceneRow>
                  </ul>
                </SceneBox>
                <ScaleBar>0.1 [m]</ScaleBar>
              </Stage>
            </Viewer>
          </Workspace>
        </Page>
        <HelpDock>
          <DockButton $gap={6} $pad={15}>
            <svg width="28" height="20" viewBox="0 0 28 20" aria-hidden="true">
              <ellipse cx="13.5" cy="9.5" rx="13" ry="8.5" fill="#fff" />
              <path d="M20 14L27 18L16 17Z" fill="#fff" />
              <path d="M7 5H13V4H19V5H20V14H7Z" fill="#00609f" />
              <circle cx="14" cy="9.5" r="3.6" fill="#fff" />
              <circle cx="14" cy="9.5" r="2" fill="#00609f" />
            </svg>
            Report an issue
          </DockButton>
          <DockButton $gap={10} $pad={11}>
            <svg width="18" height="16" viewBox="0 0 18 16" aria-hidden="true">
              <path d="M1 2H17V12H8L4 16V12H1Z" fill="#fff" />
            </svg>
            Chat
          </DockButton>
          <NoticeButton>!</NoticeButton>
        </HelpDock>
      </Shell>
    );
  }
}

export default App;
